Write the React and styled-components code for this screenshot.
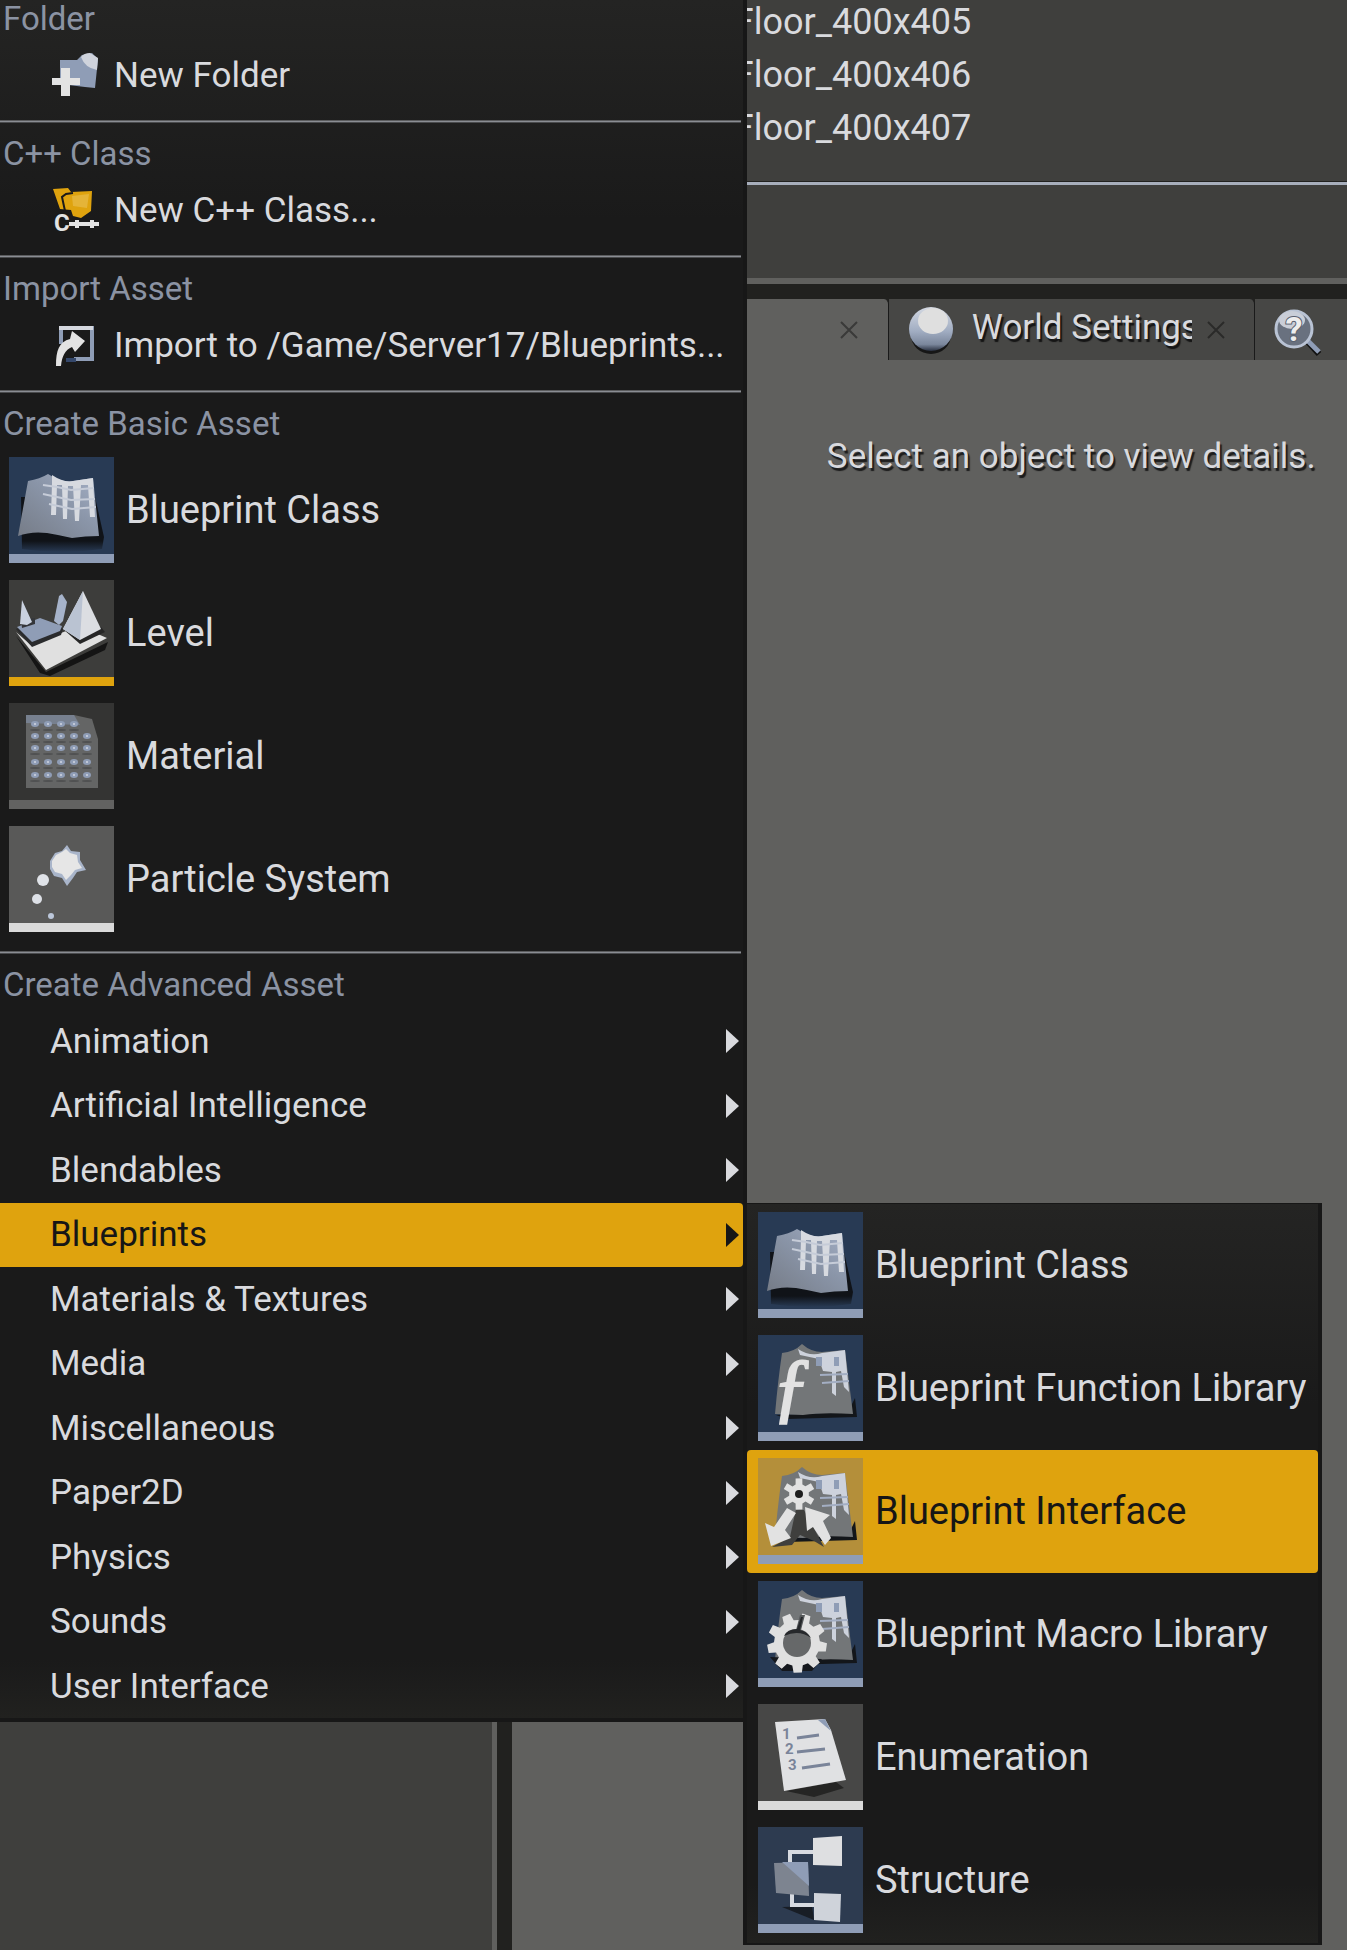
import React from 'react';
import styled, { createGlobalStyle, css } from 'styled-components';

const c = {
  menu: '#1a1a1a',
  menuTop: '#242423',
  edge: '#171717',
  dark: '#21211f',
  panel: '#3f3f3d',
  grey: '#60605e',
  line: '#8a8d93',
  text: '#d9dade',
  heading: '#8b93a3',
  soft: '#8f9db6',
  amber: '#dfa30e',
  navy: '#283a54',
};

const GlobalStyle = createGlobalStyle`
  * { box-sizing: border-box; }
  body { margin: 0; background: ${c.grey}; font-family: Roboto, 'Liberation Sans', sans-serif; color: ${c.text}; }
  button { font: inherit; color: inherit; background: none; border: 0; padding: 0; margin: 0; text-align: left; cursor: pointer; }
  ul { list-style: none; margin: 0; padding: 0; }
  h2, p { margin: 0; font-weight: 400; }
  svg { display: block; flex: none; overflow: visible; }
`;

const Editor = styled.div`
  position: relative;
  display: flex;
  min-height: 100vh;
  overflow: hidden;
`;

const LeftDock = styled.div`
  flex: 0 0 38%;
  background: ${c.panel};
  border-right: 15px solid ${c.dark};
  box-shadow: inset -5px 0 0 ${c.grey};
`;

const RightDock = styled.main`
  flex: 1;
  min-width: 0;
  display: flex;
  flex-direction: column;
  background: ${c.grey};
`;

const Outliner = styled.ul`
  height: 182px;
  padding-left: 222px;
  background: ${c.panel};
  border-bottom: 1px solid ${c.dark};
  font-size: 36px;
  line-height: 53px;
  overflow: hidden;
`;

const OutlinerRow = styled.li`
  &:first-child { margin-top: -4px; }
`;

const OutlinerFooter = styled.div`
  height: 102px;
  background: ${c.panel};
  border-top: 3px solid #a7aebb;
  border-bottom: 6px solid ${c.grey};
`;

const TabBar = styled.div`
  display: flex;
  height: 76px;
  padding-top: 15px;
  background: ${c.dark};
`;

const Tab = styled.div`
  display: flex;
  align-items: center;
  flex: 0 0 ${(p) => p.$width}px;
  padding: 0 ${(p) => (p.$active ? 30 : 29)}px 0 19px;
  justify-content: ${(p) => (p.$active ? 'flex-end' : 'space-between')};
  background: ${(p) => (p.$active ? c.grey : '#474745')};
  border-right: 1px solid ${c.menu};
  border-radius: 0 5px 0 0;
  color: ${(p) => (p.$active ? '#3a3a39' : '#2a2a29')};
`;

const TabLabel = styled.button`
  display: flex;
  align-items: center;
  gap: 18px;
  height: 60px;
  color: ${c.text};
  font-size: 35px;
  text-shadow: 2px 3px 1px #151515;
`;

const TabText = styled.span`
  width: 220px;
  padding-bottom: 4px;
  overflow: hidden;
  white-space: nowrap;
  line-height: 56px;
`;

const Hint = styled.p`
  padding: 77px 0 0 315px;
  font-size: 35px;
  line-height: 40px;
  white-space: nowrap;
  text-shadow: 2px 3px 1px #1c1c1c;
`;

const Menu = styled.nav`
  position: absolute;
  top: 0;
  left: 0;
  width: 747px;
  background: linear-gradient(${c.menuTop}, ${c.menu} 220px, ${c.menu} 1660px, ${c.dark});
  border-right: 4px solid ${c.edge};
  border-bottom: 4px solid ${c.edge};
`;

const Section = styled.section`
  padding-bottom: ${(p) => p.$bottom ?? 13}px;
`;

const Divider = styled.hr`
  height: 3px;
  margin: 0 2px 12px 0;
  border: 0;
  background: ${c.line};
  border-bottom: 1px solid #4a4b4d;
  border-top: 1px solid #5b5c5e;
`;

const Heading = styled.h2`
  margin-bottom: 5px;
  padding-left: 3px;
  font-size: 33px;
  line-height: 38px;
  color: ${c.heading};
`;

const selected = css`
  background: ${c.amber};
  color: #161616;
`;

const CommandRow = styled.button`
  display: flex;
  align-items: center;
  gap: 16px;
  width: 100%;
  height: 64px;
  padding-left: 52px;
  font-size: 35px;
  white-space: nowrap;
`;

const AssetRow = styled.button`
  display: flex;
  align-items: center;
  gap: 12px;
  width: 100%;
  height: 123px;
  padding-left: ${(p) => (p.$inset ? 11 : 9)}px;
  border-radius: 4px;
  font-size: 38px;
  line-height: 44px;
  white-space: nowrap;
  ${(p) => p.$selected && selected}
`;

const Thumb = styled.span`
  flex: none;
  width: 105px;
  height: 106px;
  background: ${(p) => p.$bg};
  border-bottom: 9px solid ${(p) => p.$bar};
`;

const CategoryList = styled.ul`
  display: flex;
  flex-direction: column;
  justify-content: space-between;
  height: 709px;
`;

const CategoryItem = styled.li`
  position: relative;
`;

const CategoryRow = styled.button`
  display: flex;
  align-items: center;
  justify-content: space-between;
  width: 100%;
  height: 64px;
  padding: 0 4px 0 50px;
  border-radius: 0 4px 4px 0;
  font-size: 35px;
  ${(p) => p.$selected && selected}
`;

const Submenu = styled.div`
  position: absolute;
  top: 0;
  left: 100%;
  width: 579px;
  padding-bottom: 1px;
  background: linear-gradient(${c.menuTop}, ${c.menu} 200px, ${c.menu} 680px, ${c.dark});
  border: solid ${c.edge};
  border-width: 1px 4px 2px 4px;
`;

/* ---------- small icons ---------- */

const NewFolderIcon = () => (
  <svg width="46" height="46" viewBox="0 0 46 46">
    <path d="M8 8l17 0 5-5 10-2 6 6-3 29-10-1-25-3z" fill={c.soft} />
    <path d="M29 5q3-4 9-4l8 5-1 12q-12-2-16-13z" fill="#cfd3dc" />
    <path d="M9 16h9v10h10v7H18v11H9V33H0v-7h9z" fill="#e3e3e3" />
  </svg>
);

const CppIcon = () => (
  <svg width="46" height="46" viewBox="0 0 46 46">
    <path d="M1 2l15-1 3 4 21-1-1 20-10 7-8-2-2-6-11-1z" fill={c.amber} />
    <path d="M13 24L10 10l4-3 7-1" fill="none" stroke={c.menu} strokeWidth="2" />
    <path d="M20 9l17-2-2 14-14-2z" fill="#eabf55" opacity=".6" />
    <text x="2" y="44" fontFamily="Roboto, sans-serif" fontWeight="700" fontSize="24" fill="#e3e3e3" stroke={c.menu} strokeWidth="3" paintOrder="stroke">C</text>
    <path d="M17 37h30M25 33v8M40 33v8" stroke="#e3e3e3" strokeWidth="4" />
  </svg>
);

const ImportIcon = () => (
  <svg width="46" height="46" viewBox="0 0 46 46">
    <path d="M9 22V6h31v31H22" fill="none" stroke={c.soft} strokeWidth="4" />
    <path d="M7 6h34" stroke="#d5d8df" strokeWidth="4" />
    <path d="M14 38h10" stroke="#34476a" strokeWidth="4" />
    <path d="M4 44c0-16 3-24 14-27l2-8 13 10-10 11-3-5c-7 3-10 9-11 19z" fill="#e3e3e3" />
  </svg>
);

const Arrow = () => (
  <svg width="13" height="24" viewBox="0 0 13 24">
    <path d="M0 0l13 12L0 24z" fill="currentColor" />
  </svg>
);

const CloseIcon = () => (
  <svg width="18" height="18" viewBox="0 0 18 18">
    <path d="M1 1l16 16M17 1L1 17" stroke="currentColor" strokeWidth="2" />
  </svg>
);

const SphereIcon = () => (
  <svg width="46" height="50" viewBox="0 0 46 50">
    <defs>
      <linearGradient id="ball" x1="0" y1="0" x2="0" y2="1">
        <stop offset="0" stopColor="#d3d8e2" />
        <stop offset=".55" stopColor="#a1adc2" />
        <stop offset=".85" stopColor="#7b879c" />
        <stop offset="1" stopColor="#293040" />
      </linearGradient>
    </defs>
    <ellipse cx="23" cy="30" rx="20" ry="19" fill="#161616" />
    <circle cx="23" cy="24" r="22" fill="url(#ball)" />
    <ellipse cx="25" cy="16" rx="15" ry="13" fill="#dfdfdf" />
  </svg>
);

const SearchHelpIcon = () => (
  <svg width="48" height="50" viewBox="0 0 48 50">
    <path d="M34 37l11 12" stroke="#111" strokeWidth="6" />
    <path d="M33 35l12 12" stroke={c.soft} strokeWidth="5" />
    <circle cx="20" cy="24" r="18" fill="#69717f" stroke="#b9c3d4" strokeWidth="3" />
    <ellipse cx="18" cy="15" rx="13" ry="9" fill="#c9ced8" />
    <text x="20" y="36" textAnchor="middle" fontFamily="Roboto, sans-serif" fontWeight="700" fontSize="34" fill="#ededed" stroke="#596170" strokeWidth="2" paintOrder="stroke">?</text>
  </svg>
);

/* ---------- asset thumbnails, drawn on a 105 x 97 canvas ---------- */

const Canvas = ({ children }) => (
  <svg width="105" height="97" viewBox="0 0 105 97">{children}</svg>
);

const SheetArt = () => (
  <Canvas>
    <defs>
      <linearGradient id="sheet" x1="0" y1="1" x2="1" y2="0">
        <stop offset="0" stopColor="#757b86" />
        <stop offset=".55" stopColor="#8a95a8" />
        <stop offset="1" stopColor="#a5b0c6" />
      </linearGradient>
      <linearGradient id="cast" x1="0" y1="0" x2="0" y2="1">
        <stop offset=".8" stopColor="#101318" />
        <stop offset="1" stopColor="#101318" stopOpacity="0" />
      </linearGradient>
    </defs>
    <path d="M12 40h74l9 40-2 12q-40 6-80 0z" fill="url(#cast)" />
    <path d="M19 24q12-2 20-7q14 9 25 7l20-3 6 58q-14 0-27 2q-13-3-25-5q-16-2-29 3z" fill="url(#sheet)" />
    <path d="M43 18q12 8 21 6l20-3 2 39h-5l-2-32h-7l-2 36h-4l-2-35h-5l-1 33h-4l-1-34h-5l-1 30h-5l1-31z" fill="#d7dae0" />
    <path d="M34 28l14 2 14 3 23-2M34 37l14 3 14 3 24-1M40 47l23 5 24-2" fill="none" stroke="#c6ccd8" strokeWidth="2" />
  </Canvas>
);

const BackSheet = () => (
  <>
    <path d="M18 80l72-3 7-14 2 19-70 2z" fill="#13161a" />
    <path d="M24 18q12-1 20-9q9 8 20 8l23-2 8 64q-30-2-50 1l-28-1q3-34 7-61z" fill="#737678" />
    <path d="M40 14q12 8 24 4l23-3 4 42-5-5-3-16-5 1v24l-4-3V37l-9-1-4-12-19-4z" fill="#cdd2dc" />
    <path d="M58 22h6v9h-6zM76 22h5v9h-5z" fill={c.soft} />
    <path d="M62 40l28-1M64 48l27-2" stroke="#a3aec3" strokeWidth="2" />
  </>
);

const FunctionArt = () => (
  <Canvas>
    <BackSheet />
    <text x="14" y="77" fontFamily="'Liberation Serif', serif" fontStyle="italic" fontSize="78" fill="#e2e2e2" stroke="#e2e2e2" strokeWidth="2">ƒ</text>
  </Canvas>
);

const gearPath = (cx, cy, outer, inner, teeth, turn = 0) => {
  const pts = [];
  const step = (Math.PI * 2) / teeth;
  for (let i = 0; i < teeth; i += 1) {
    const a = i * step + turn;
    [[-0.33, inner], [-0.2, outer], [0.2, outer], [0.33, inner]].forEach(([o, r]) => {
      pts.push(`${(cx + Math.cos(a + o * step) * r).toFixed(1)} ${(cy + Math.sin(a + o * step) * r).toFixed(1)}`);
    });
  }
  return `M${pts.join('L')}Z`;
};

const InterfaceArt = () => (
  <Canvas>
    <BackSheet />
    <path d="M14 89l18-10 6-28 8 1 20 37-10-6-14-6-8 10z" fill="#3f3f3d" />
    <path d={gearPath(41, 36, 16, 10, 6, 0.52)} fill="#e2e2e2" />
    <circle cx="41" cy="36" r="4" fill="#1d1d1d" />
    <path d="M29 50l9 5-11 17 6 8-20 8-6-23 9 4z" fill="#e2e2e2" />
    <path d="M47 49l25 8-7 6 8 17-6 7-12-18-6 4z" fill="#e2e2e2" />
  </Canvas>
);

const MacroArt = () => (
  <Canvas>
    <BackSheet />
    <path d="M12 76l12 14 30 0 10-12z" fill="#15181d" />
    <path d={gearPath(39, 62, 30, 23, 9, 0.15)} fill="#e0e0e0" />
    <circle cx="39" cy="62" r="14" fill="#666869" />
    <path d="M38 49l4-15 5 0-4 15z" fill="#55585a" />
    <path d="M26 55q3-7 13-7l4-12 2 0-3 13q7 1 11 8q-12-9-27-2z" fill="#26282b" />
  </Canvas>
);

const EnumArt = () => (
  <Canvas>
    <path d="M28 87l50-9 8 6-30 9z" fill="#252524" />
    <path d="M17 18l50-3 6 11 15 50-62 11z" fill="#e0e1e3" />
    <path d="M60 16l7-1 6 12z" fill={c.soft} />
    <path d="M39 34l22-3M39 48l28-3M44 64l28-4" stroke="#7a8499" strokeWidth="3" />
    <g fontFamily="Roboto, sans-serif" fontWeight="700" fontSize="15" fill="#7a8499">
      <text x="24" y="35">1</text>
      <text x="27" y="50">2</text>
      <text x="30" y="66">3</text>
    </g>
  </Canvas>
);

const StructArt = () => (
  <Canvas>
    <path d="M24 80l30-1 2 14z" fill="#181d25" />
    <path d="M32 38V25h24M34 66v12h22" fill="none" stroke="#d7dae0" strokeWidth="4" />
    <path d="M16 36l34-1 1 34-33-3z" fill="#7d8490" />
    <path d="M24 35l26 0 1 24z" fill={c.soft} />
    <path d="M55 11l29-2v30l-29-1z" fill="#dedfe1" />
    <path d="M56 66l27 1-1 28-26-2z" fill="#cfd3da" />
  </Canvas>
);

const LevelArt = () => (
  <Canvas>
    <path d="M7 56l30 36 62-30-3 8-55 26-10-3z" fill="#141414" />
    <path d="M7 52l30 38 61-32-28-12-18 7-29 13z" fill="#e0e0e0" />
    <path d="M7 49l24-10 23 10-2 6-29 12z" fill="#2a2b2d" />
    <path d="M8 47l23-9 22 8-2 5-28 11z" fill={c.soft} />
    <path d="M12 40l14-2 0 6-13 4z" fill="#34363a" />
    <path d="M13 20l10 22-5 3-7-1z" fill="#c9d1df" />
    <path d="M53 14l5 8-4 19-4 4-5-4 5-25z" fill="#a6b3ca" />
    <path d="M54 49l17 15 25-12-4-5z" fill="#262626" />
    <path d="M74 11l18 38-21 11-17-11z" fill="#dcdee2" />
    <path d="M74 11l-3 49-17-11z" fill="#bac3d2" />
  </Canvas>
);

const MaterialArt = () => (
  <Canvas>
    <path d="M17 12h48l18 4 6 20v49H17z" fill="#646565" />
    <path d="M17 12h48l6 10-54-2z" fill="#77808f" />
    {[21, 33, 45, 59, 72].map((y) =>
      [26, 39, 52, 65, 78].map((x) => (x > 70 && y < 30 ? null : (
        <g key={`${x}-${y}`}>
          <ellipse cx={x} cy={y + 6} rx="5" ry="1" fill="#505152" />
          <ellipse cx={x} cy={y} rx="4" ry="3" fill={c.soft} />
          <circle cx={x} cy={y} r="1" fill="#d0d6e0" />
        </g>
      )))
    )}
  </Canvas>
);

const ParticleArt = () => (
  <Canvas>
    <path d="M58 19l4 6 9 1v8l6 10-9 2-4 6-6 8-5-8-8-2-4-7 0-8 5-8 7-2z" fill="#a9b5ca" />
    <path d="M57 23l4 4 7 2 1 7 4 6-7 2-4 5-5 5-4-6-7-2-3-5 0-6 4-6 6-3z" fill="#e6e6e6" />
    <circle cx="34" cy="54" r="6" fill="#e0e3e8" />
    <circle cx="28" cy="73" r="5" fill="#dde0e6" />
    <circle cx="42" cy="90" r="3" fill="#bcc7da" />
  </Canvas>
);

/* ---------- data ---------- */

const commands = [
  { heading: 'Folder', label: 'New Folder', Icon: NewFolderIcon },
  { heading: 'C++ Class', label: 'New C++ Class...', Icon: CppIcon },
  { heading: 'Import Asset', label: 'Import to /Game/Server17/Blueprints...', Icon: ImportIcon },
];

const basicAssets = [
  { label: 'Blueprint Class', Art: SheetArt, bg: c.navy, bar: c.soft },
  { label: 'Level', Art: LevelArt, bg: '#3d3d3b', bar: c.amber },
  { label: 'Material', Art: MaterialArt, bg: '#343433', bar: '#626261' },
  { label: 'Particle System', Art: ParticleArt, bg: '#595958', bar: '#dadada' },
];

const categories = [
  'Animation', 'Artificial Intelligence', 'Blendables', 'Blueprints', 'Materials & Textures', 'Media',
  'Miscellaneous', 'Paper2D', 'Physics', 'Sounds', 'User Interface',
];

const blueprintAssets = [
  { label: 'Blueprint Class', Art: SheetArt, bg: c.navy, bar: c.soft },
  { label: 'Blueprint Function Library', Art: FunctionArt, bg: c.navy, bar: c.soft },
  { label: 'Blueprint Interface', Art: InterfaceArt, bg: '#b48f3a', bar: c.soft, selected: true },
  { label: 'Blueprint Macro Library', Art: MacroArt, bg: c.navy, bar: c.soft },
  { label: 'Enumeration', Art: EnumArt, bg: '#474746', bar: '#dadada' },
  { label: 'Structure', Art: StructArt, bg: '#2d3b50', bar: c.soft },
];

const actors = ['Floor_400x405', 'Floor_400x406', 'Floor_400x407'];

const AssetList = ({ items, inset }) => items.map(({ label, Art, bg, bar, selected: on }) => (
  <AssetRow key={label} type="button" $selected={on} $inset={inset}>
    <Thumb $bg={bg} $bar={bar}><Art /></Thumb>
    {label}
  </AssetRow>
));

export default function App() {
  return (
    <>
      <GlobalStyle />
      <Editor>
        <LeftDock />
        <RightDock>
          <Outliner>
            {actors.map((name) => <OutlinerRow key={name}>{name}</OutlinerRow>)}
          </Outliner>
          <OutlinerFooter />
          <TabBar>
            <Tab $active $width={377}>
              <button type="button" aria-label="Close"><CloseIcon /></button>
            </Tab>
            <Tab $width={366}>
              <TabLabel type="button">
                <SphereIcon />
                <TabText>World Settings</TabText>
              </TabLabel>
              <button type="button" aria-label="Close"><CloseIcon /></button>
            </Tab>
            <Tab $width={366}>
              <SearchHelpIcon />
            </Tab>
          </TabBar>
          <Hint>Select an object to view details.</Hint>
        </RightDock>

        <Menu>
          {commands.map(({ heading, label, Icon }, i) => (
            <React.Fragment key={heading}>
              {i > 0 && <Divider />}
              <Section>
                <Heading>{heading}</Heading>
                <CommandRow type="button"><Icon />{label}</CommandRow>
              </Section>
            </React.Fragment>
          ))}
          <Divider />
          <Section $bottom={11}>
            <Heading>Create Basic Asset</Heading>
            <AssetList items={basicAssets} />
          </Section>
          <Divider />
          <Section $bottom={0}>
            <Heading>Create Advanced Asset</Heading>
            <CategoryList>
              {categories.map((name) => {
                const open = name === 'Blueprints';
                return (
                  <CategoryItem key={name}>
                    <CategoryRow type="button" $selected={open}>{name}<Arrow /></CategoryRow>
                    {open && <Submenu><AssetList items={blueprintAssets} inset /></Submenu>}
                  </CategoryItem>
                );
              })}
            </CategoryList>
          </Section>
        </Menu>
      </Editor>
    </>
  );
}
